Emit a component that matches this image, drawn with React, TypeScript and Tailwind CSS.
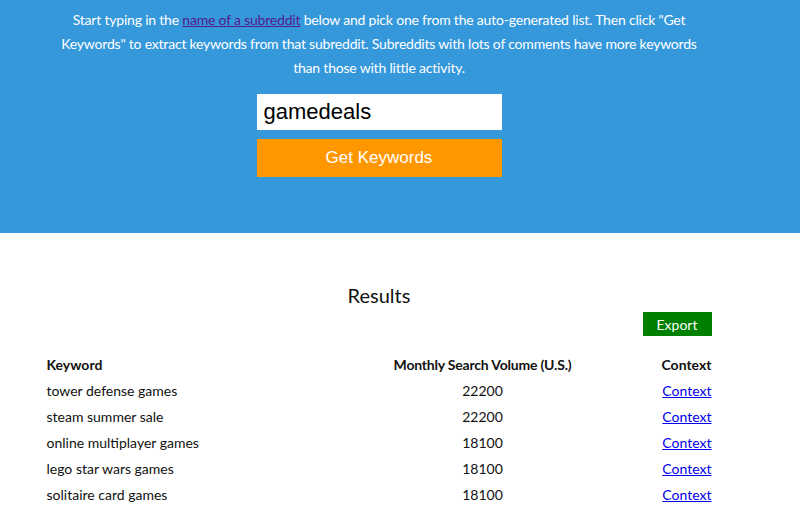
const ROWS = [
  { keyword: "tower defense games", volume: 22200 },
  { keyword: "steam summer sale", volume: 22200 },
  { keyword: "online multiplayer games", volume: 18100 },
  { keyword: "lego star wars games", volume: 18100 },
  { keyword: "solitaire card games", volume: 18100 },
];

export default function App() {
  return (
    <div className="min-h-[530px] bg-white font-['Lato',sans-serif] text-[#111]">
      <header className="flex h-[233px] flex-col items-center bg-[#3498db] pt-[8px] pr-[42px]">
        <p className="w-[662px] text-center text-[14px] leading-[24px] tracking-[-0.2px] text-white">
          Start typing in the{" "}
          <a href="#" className="text-[#551a8b] underline">
            name of a subreddit
          </a>{" "}
          below and pick one from the auto-generated list. Then click "Get Keywords" to extract keywords from that
          subreddit. Subreddits with lots of comments have more keywords than those with little activity.
        </p>
        <input
          readOnly
          value="gamedeals"
          className="mt-[14px] h-[36px] w-[245px] bg-white px-[7px] font-['Liberation_Sans',sans-serif] text-[22px] text-black outline-none"
        />
        <button className="mt-[9px] h-[38px] w-[245px] bg-[#ff9800] font-['Liberation_Sans',sans-serif] text-[17px] text-white">
          Get Keywords
        </button>
      </header>

      <section className="flex flex-col items-center pt-[49px] pr-[42px]">
        <h2 className="text-[20px] leading-[26px] font-normal">Results</h2>
        <div className="w-[665px]">
          <div className="flex justify-end">
            <button className="mt-[4px] h-[24px] w-[69px] bg-[#008000] text-[14px] text-white">Export</button>
          </div>
          <div className="mt-[16px] grid grid-cols-[259px_354px_52px] text-[14px] leading-[26px]">
            <div className="font-bold">Keyword</div>
            <div className="text-center font-bold tracking-[-0.2px]">Monthly Search Volume (U.S.)</div>
            <div className="text-right font-bold">Context</div>
            {ROWS.map((r) => (
              <>
                <div key={r.keyword + "k"}>{r.keyword}</div>
                <div key={r.keyword + "v"} className="text-center">
                  {r.volume}
                </div>
                <a key={r.keyword + "c"} href="#" className="text-right text-[#0000ee] underline">
                  Context
                </a>
              </>
            ))}
          </div>
        </div>
      </section>
    </div>
  );
}
